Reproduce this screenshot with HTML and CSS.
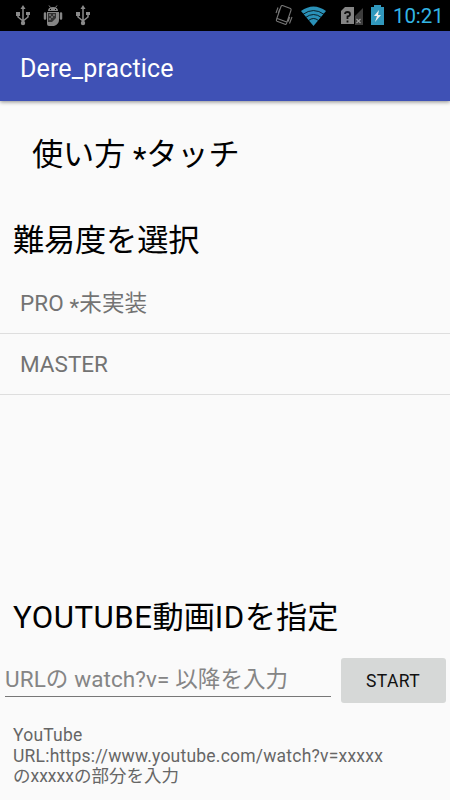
FILE: index.html
```html
<!DOCTYPE html>
<html lang="ja">
<head>
<meta charset="utf-8">
<title>Dere_practice</title>
<link rel="stylesheet" href="styles.css">
</head>
<body>
<div class="screen">
  <header class="status">
    <div class="notifications">
      <svg class="usb" width="14" height="21" viewBox="0 0 14 21"><path d="M7 2V18M2 8v4l5 4 5-4V8" fill="none" stroke="#8a8a8a" stroke-width="1.5"/><path d="M7 0l2.5 4h-5zM0 7h4v4H0zM10 7h4v3h-4z" fill="#8a8a8a"/><circle cx="7" cy="18" r="2.2" fill="#8a8a8a"/></svg>
      <svg class="droid" width="20" height="22" viewBox="0 0 20 22"><path d="M5 6Q5 2 10 2t5 4zM4 7h12v8q0 4-5 6H6q-2 0-2-2z" fill="#858585"/><path d="M6 .5l1.500 2M14 .5l-1.500 2" stroke="#858585" stroke-width="1"/><path d="M2 8.500v5M18 8.500v5" stroke="#858585" stroke-width="2.500" stroke-linecap="round"/><path d="M5 8h8v5l-4 4H5z" fill="#333"/><path d="M6 9h2v2H6zM10 9h2v2h-2zM8 11h2v2H8zM6 13h2v2H6z" fill="#686868"/><path d="M7 4h1v1H7zM12 4h1v1h-1z" fill="#000"/></svg>
      <svg class="usb" width="14" height="21" viewBox="0 0 14 21"><path d="M7 2V18M2 8v4l5 4 5-4V8" fill="none" stroke="#8a8a8a" stroke-width="1.5"/><path d="M7 0l2.500 4h-5zM0 7h4v4H0zM10 7h4v3h-4z" fill="#8a8a8a"/><circle cx="7" cy="18" r="2.200" fill="#8a8a8a"/></svg>
    </div>
    <div class="system">
      <svg class="vibrate" width="18" height="22" viewBox="0 0 18 22"><path d="M7.500 1.500L15.500 4.500Q16.500 5 16 6.200L11.500 19.500Q11 20.700 10 20.300L2 17.300Q1 16.800 1.500 15.500L6 2.500Q6.500 1.200 7.500 1.500zM2.300 14.500l10 3.700M1 9l2-5.500M3.300 9l1.500-4M17 13l-2.500 6.500M14.700 13l-1.500 4.500" fill="none" stroke="#777" stroke-width="1.100"/></svg>
      <svg class="wifi" width="25" height="20" viewBox="0 0 25 20"><path d="M0 5Q12.500-4 25 5L12.500 20z" fill="#2a91b8"/><path d="M2 8.300q10.500-7.500 21 0M4.500 11.500q8-6 16 0M7.500 14.500q5-4 10 0" fill="none" stroke="#000" stroke-width=".8"/></svg>
      <svg class="sim" width="22" height="19" viewBox="0 0 22 19"><path d="M4 0h9v17H0V4z" fill="#858585"/><path d="M14 9l8-8v17h-8z" fill="#3d3d3d"/><path d="M4 7q0-2 2.500-2T9 7.200Q9 9 6.500 9.500V12M6.500 13.500v2" fill="none" stroke="#111" stroke-width="1.800"/><path d="M15.500 12l4 4m0-4l-4 4" stroke="#999" stroke-width="1.200"/></svg>
      <svg class="battery" width="13" height="20" viewBox="0 0 13 20"><path d="M3 0h7v2h3v18H0V2h3z" fill="#3198bd"/><path d="M8 5l-5 6h3l-2 6 6-7H7z" fill="#eee"/></svg>
      <span class="clock">10:21</span>
    </div>
  </header>
  <div class="appbar"><h1>Dere_practice</h1></div>
  <main>
    <div class="usage">使い方 <span class="star">*</span>タッチ</div>
    <h2 class="heading difficulty">難易度を選択</h2>
    <ul>
      <li>PRO <span class="star">*</span>未実装</li>
      <li class="master">MASTER</li>
    </ul>
    <h2 class="heading video"><span class="latin">YOUTUBE</span>動画<span class="latin">ID</span>を指定</h2>
    <div class="entry">
      <div class="field">URLの watch?v= 以降を入力</div>
      <div class="start">START</div>
    </div>
    <div class="help"><span class="brand">YouTube</span><br><span class="url">URL:https://www.youtube.com/watch?v=xxxxx</span><br><span class="part">のxxxxxの部分を入力</span></div>
  </main>
</div>
</body>
</html>
```
FILE: styles.css
```css
* { box-sizing: border-box; }
body { margin: 0; font-family: Roboto, "Noto Sans CJK JP", sans-serif; }
.screen { width: 450px; height: 800px; overflow: hidden; background: #fafafa; }
.status { height: 31px; background: #000; display: flex; justify-content: space-between; }
.notifications { display: flex; padding: 5px 0 0 16px; gap: 13px; }
.system { display: flex; padding-right: 8px; }
.vibrate { margin: 4px 8px 0 0; }
.wifi { margin: 6px 15px 0 0; }
.sim { margin: 7px 8px 0 0; }
.battery { margin: 5px 9px 0 0; }
.clock { width: 49px; color: #33b5e5; font-size: 20.5px; line-height: 32px; letter-spacing: -.1px; white-space: nowrap; }
.appbar { height: 70px; padding-left: 20px; background: #3f51b5; box-shadow: 0 1px 4px rgba(0,0,0,.45); position: relative; }
h1 { margin: 0; color: #fff; font-size: 25px; font-weight: 400; line-height: 75px; letter-spacing: .15px; }
.usage, .heading { color: #000; font-size: 31.2px; font-weight: 400; line-height: 44px; margin: 0; white-space: nowrap; }
.star { position: relative; top: 4px; }
.usage { margin: 32px 0 0 32px; letter-spacing: -.1px; }
.difficulty { margin: 42px 0 0 13px; letter-spacing: -.15px; }
.latin { letter-spacing: .5px; }
ul { list-style: none; margin: 10px 0 0; padding: 0; }
li { height: 61px; padding-left: 20px; border-bottom: 1px solid #dedede; font-size: 22.5px; line-height: 60px; color: #737373; letter-spacing: .1px; white-space: nowrap; }
.master { letter-spacing: 0; }
.video { margin: 201px 0 0 13px; }
.entry { display: flex; margin-top: 18px; padding: 0 4.500px 0 5px; gap: 10px; }
.field { width: 326px; height: 39px; border-bottom: 1px solid #777; color: #858585; font-size: 22.5px; line-height: 42px; letter-spacing: .1px; white-space: nowrap; }
.start { width: 105px; height: 45px; border-radius: 3px; background: #d6d8d7; color: #111; text-align: center; font-size: 17.5px; line-height: 47px; letter-spacing: .4px; }
.help { margin: 22px 0 0 13px; font-size: 17.5px; line-height: 20.5px; color: #666; white-space: nowrap; }
.brand, .url { letter-spacing: .22px; }
```
